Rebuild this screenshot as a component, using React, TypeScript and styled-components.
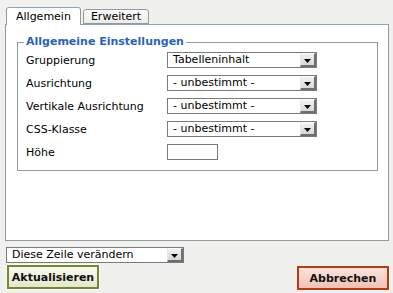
import React from "react";
import styled, { createGlobalStyle } from "styled-components";

const Global = createGlobalStyle`
  html, body { margin: 0; padding: 0; background: #f0f0ee; }
  body { font-family: "DejaVu Sans", Verdana, sans-serif; font-size: 11px; color: #000; }
`;

const Page = styled.div`
  width: 393px;
  height: 293px;
  box-sizing: border-box;
  padding: 7px 4px 0 5px;
  display: flex;
  flex-direction: column;
`;

const TabBar = styled.div`
  display: flex;
  align-items: flex-end;
  gap: 2px;
  padding-left: 1px;
  height: 17px;
  position: relative;
  z-index: 1;
`;

const Tab = styled.div<{ $active?: boolean }>`
  box-sizing: border-box;
  height: ${(p) => (p.$active ? "18px" : "15px")};
  margin-bottom: ${(p) => (p.$active ? "-1px" : "0")};
  padding: 0 ${(p) => (p.$active ? "9px" : "7px")};
  display: flex;
  align-items: center;
  border: 1px solid #919b9c;
  border-bottom: ${(p) => (p.$active ? "none" : "1px solid #919b9c")};
  border-radius: 3px 3px 0 0;
  background: ${(p) => (p.$active ? "#fff" : "linear-gradient(#fcfcfe, #ecebe6)")};
  border-top-color: ${(p) => (p.$active ? "#8ba4bd" : "#919b9c")};
`;

const Panel = styled.div`
  box-sizing: border-box;
  height: 217px;
  background: #fff;
  border: 1px solid #919b9c;
  border-top-color: #8ba4bd;
  padding: 11px 10px 0 11px;
`;

const Fieldset = styled.fieldset`
  margin: 0;
  box-sizing: border-box;
  height: 135px;
  border: 1px solid #919b9c;
  padding: 0 8px 0 8px;
`;

const Legend = styled.legend`
  color: #2b63b8;
  font-weight: bold;
  padding: 0 2px;
  margin-left: -2px;
  line-height: 12px;
`;

const Rows = styled.div`
  display: flex;
  flex-direction: column;
  gap: 7px;
  padding-top: 4px;
`;

const Row = styled.div`
  display: grid;
  grid-template-columns: 141px auto;
  align-items: center;
  height: 16px;
`;

const Label = styled.span`
  white-space: nowrap;
`;

const Select = styled.div<{ $width: number }>`
  box-sizing: border-box;
  width: ${(p) => p.$width}px;
  height: 16px;
  border: 1px solid #7a7a7a;
  background: #fff;
  display: flex;
  align-items: center;
  padding-left: 5px;
  white-space: nowrap;
`;

const SelectText = styled.span`
  flex: 1;
  line-height: 14px;
`;

const ArrowBox = styled.span`
  box-sizing: border-box;
  width: 16px;
  height: 14px;
  background: linear-gradient(#f2f2f2, #d8d8d8);
  border-left: 1px solid #e8e8e8;
  border-top: 1px solid #ffffff;
  border-right: 2px solid #6f6f6f;
  border-bottom: 2px solid #6f6f6f;
  display: flex;
  align-items: flex-end;
  justify-content: center;
  padding-bottom: 2px;
`;

const TextInput = styled.div`
  box-sizing: border-box;
  width: 51px;
  height: 16px;
  border: 1px solid #7a7a7a;
  background: #fff;
`;

const BottomSelect = styled.div`
  margin-top: 6px;
  margin-left: 1px;
`;

const ButtonRow = styled.div`
  display: flex;
  justify-content: space-between;
  margin-top: 2px;
  padding-left: 2px;
  padding-right: 0;
`;

const Button = styled.div<{ $tone: "ok" | "cancel" }>`
  box-sizing: border-box;
  width: 92px;
  height: 24px;
  outline: 1px solid #fafafa;
  border: 2px solid ${(p) => (p.$tone === "ok" ? "#728a2c" : "#c2360c")};
  background: ${(p) =>
    p.$tone === "ok"
      ? "linear-gradient(#fafaf0, #e6e6cc)"
      : "linear-gradient(#fbe3dc, #efc2b6)"};
  font-weight: bold;
  font-size: 11px;
  display: flex;
  align-items: center;
  justify-content: center;
  color: #111;
  margin-top: ${(p) => (p.$tone === "ok" ? "0" : "1px")};
`;

const Arrow = () => (
  <svg width="7" height="4" viewBox="0 0 7 4">
    <path d="M0 0H7L3.5 4Z" fill="#000" />
  </svg>
);

const Dropdown = ({ value, width }: { value: string; width: number }) => (
  <Select $width={width}>
    <SelectText>{value}</SelectText>
    <ArrowBox>
      <Arrow />
    </ArrowBox>
  </Select>
);

const rows: { label: string; value?: string }[] = [
  { label: "Gruppierung", value: "Tabelleninhalt" },
  { label: "Ausrichtung", value: "- unbestimmt -" },
  { label: "Vertikale Ausrichtung", value: "- unbestimmt -" },
  { label: "CSS-Klasse", value: "- unbestimmt -" },
  { label: "Höhe" },
];

export default function App() {
  return (
    <>
      <Global />
      <Page>
        <TabBar>
          <Tab $active>Allgemein</Tab>
          <Tab>Erweitert</Tab>
        </TabBar>
        <Panel>
          <Fieldset>
            <Legend>Allgemeine Einstellungen</Legend>
            <Rows>
              {rows.map((r) => (
                <Row key={r.label}>
                  <Label>{r.label}</Label>
                  {r.value ? <Dropdown value={r.value} width={150} /> : <TextInput />}
                </Row>
              ))}
            </Rows>
          </Fieldset>
        </Panel>
        <BottomSelect>
          <Dropdown value="Diese Zeile verändern" width={178} />
        </BottomSelect>
        <ButtonRow>
          <Button $tone="ok">Aktualisieren</Button>
          <Button $tone="cancel">Abbrechen</Button>
        </ButtonRow>
      </Page>
    </>
  );
}
